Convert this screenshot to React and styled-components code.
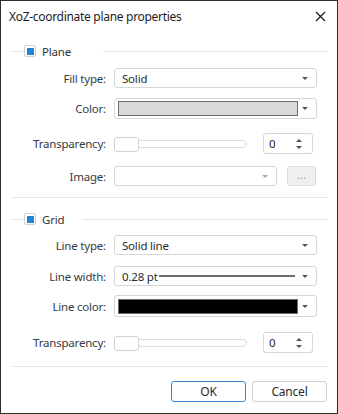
import React from 'react';
import styled, { createGlobalStyle } from 'styled-components';

const GlobalStyle = createGlobalStyle`
  html, body {
    margin: 0;
    padding: 0;
    background: #fff;
  }
  body {
    font-family: 'Segoe UI', 'Noto Sans', sans-serif;
    font-size: 11.5px;
    letter-spacing: -0.2px;
    color: #333;
  }
`;

const Dialog = styled.div`
  box-sizing: border-box;
  width: 338px;
  height: 414px;
  border: 1px solid #2d2d2d;
  background: #fff;
  display: flex;
  flex-direction: column;
`;

const TitleBar = styled.div`
  display: flex;
  align-items: center;
  justify-content: space-between;
  height: 31px;
  padding: 0 11px 0 8px;
`;

const Title = styled.div`
  font-size: 12px;
  letter-spacing: -0.3px;
  color: #1e1e1e;
`;

const CloseButton = styled.button`
  border: none;
  background: none;
  padding: 0;
  width: 11px;
  height: 11px;
  display: flex;
  cursor: pointer;
`;

const Body = styled.div`
  padding: 0 10px 0 11px;
  flex: 1;
  display: flex;
  flex-direction: column;
`;

const SectionHeader = styled.div`
  display: flex;
  align-items: center;
  height: 12px;
  margin-top: ${(p) => p.top}px;
`;

const HeaderLine = styled.div`
  height: 1px;
  background: #e6e6e6;
  flex: ${(p) => (p.grow ? 1 : 'none')};
  width: ${(p) => (p.grow ? 'auto' : '11px')};
  margin-left: ${(p) => p.gap || 0}px;
`;

const CheckBox = styled.span`
  box-sizing: border-box;
  width: 12px;
  height: 12px;
  margin-left: 1px;
  border: 1px solid #d2d2d2;
  border-radius: 2px;
  display: flex;
  align-items: center;
  justify-content: center;
  &::after {
    content: '';
    width: 7px;
    height: 7px;
    background: #1f88cf;
  }
`;

const HeaderText = styled.span`
  margin-left: 6px;
  color: #333;
`;

const Row = styled.div`
  display: grid;
  grid-template-columns: 94px 1fr;
  column-gap: 8px;
  align-items: center;
  margin-top: ${(p) => p.top}px;
  padding-right: 10px;
`;

const Label = styled.div`
  text-align: right;
  color: #333b47;
  white-space: nowrap;
`;

const Select = styled.div`
  box-sizing: border-box;
  height: ${(p) => p.h || 20}px;
  width: ${(p) => (p.w ? `${p.w}px` : '100%')};
  border: 1px solid #d6d6d6;
  border-radius: 3px;
  background: #fff;
  display: flex;
  align-items: center;
  padding: 0 8px 0 ${(p) => (p.swatch ? 3 : 7)}px;
  gap: ${(p) => (p.swatch ? 4 : 6)}px;
`;

const SelectValue = styled.span`
  flex: 1;
  display: flex;
  align-items: center;
  color: #2a2a2a;
  white-space: nowrap;
`;

const Swatch = styled.span`
  flex: 1;
  box-sizing: border-box;
  height: 15px;
  background: ${(p) => p.color};
  border: 1px solid #6e6e6e;
`;

const WidthLine = styled.span`
  flex: 1;
  height: 2px;
  background: #6b6b6b;
  margin: 0 1px 0 1px;
`;

const Arrow = styled.span`
  width: 0;
  height: 0;
  border-left: 3px solid transparent;
  border-right: 3px solid transparent;
  border-top: 3px solid ${(p) => (p.disabled ? '#a8a8a8' : '#555')};
`;

const InlineGroup = styled.div`
  display: flex;
  align-items: center;
  gap: ${(p) => p.gap}px;
`;

const Track = styled.div`
  position: relative;
  box-sizing: border-box;
  width: 133px;
  height: 8px;
  border: 1px solid #dcdcdc;
  border-radius: 4px;
  background: #fff;
`;

const Thumb = styled.div`
  position: absolute;
  left: -1px;
  top: -4px;
  box-sizing: border-box;
  width: 25px;
  height: 15px;
  background: #fff;
  border: 1px solid #d2d2d2;
  border-radius: 3px;
`;

const SpinBox = styled.div`
  box-sizing: border-box;
  width: 50px;
  height: 21px;
  border: 1px solid #d6d6d6;
  border-radius: 3px;
  display: flex;
  align-items: center;
  justify-content: space-between;
  padding: 0 10px 0 5px;
  color: #2a2a2a;
`;

const SpinArrows = styled.span`
  display: flex;
  flex-direction: column;
  gap: 4px;
  &::before, &::after {
    content: '';
    width: 0;
    height: 0;
    border-left: 3px solid transparent;
    border-right: 3px solid transparent;
  }
  &::before {
    border-bottom: 3px solid #555;
  }
  &::after {
    border-top: 3px solid #555;
  }
`;

const DotsButton = styled.button`
  box-sizing: border-box;
  width: 29px;
  height: 20px;
  border: 1px solid #dcdcdc;
  border-radius: 3px;
  background: #f0f0f0;
  color: #a0a0a0;
  font-family: inherit;
  font-size: 11px;
  padding: 0 0 4px;
  line-height: 1;
`;

const Separator = styled.div`
  height: 1px;
  background: #e6e6e6;
  margin-top: ${(p) => p.top}px;
`;

const Footer = styled.div`
  display: flex;
  justify-content: flex-end;
  gap: 6px;
  margin-top: 14px;
`;

const Button = styled.button`
  box-sizing: border-box;
  width: 75px;
  height: 21px;
  border: 1px solid ${(p) => (p.primary ? '#3d84c6' : '#d0d0d0')};
  border-radius: 3px;
  background: #fff;
  color: #2a2a2a;
  font-family: inherit;
  font-size: 12px;
  letter-spacing: -0.2px;
  padding: 0;
`;

const SectionTitle = ({ text, gap, top }) => (
  <SectionHeader top={top}>
    <HeaderLine />
    <CheckBox />
    <HeaderText>{text}</HeaderText>
    <HeaderLine grow gap={gap} />
  </SectionHeader>
);

const Slider = () => (
  <InlineGroup gap={16}>
    <Track>
      <Thumb />
    </Track>
    <SpinBox>
      <span>0</span>
      <SpinArrows />
    </SpinBox>
  </InlineGroup>
);

const App = () => (
  <>
    <GlobalStyle />
    <Dialog>
      <TitleBar>
        <Title>XoZ-coordinate plane properties</Title>
        <CloseButton aria-label='Close'>
          <svg width='11' height='11' viewBox='0 0 11 11'>
            <path d='M1 1 L10 10 M10 1 L1 10' stroke='#1a1a1a' strokeWidth='1.2' />
          </svg>
        </CloseButton>
      </TitleBar>
      <Body>
        <SectionTitle text='Plane' gap={32} top={13} />

        <Row top={11}>
          <Label>Fill type:</Label>
          <Select>
            <SelectValue>Solid</SelectValue>
            <Arrow />
          </Select>
        </Row>

        <Row top={10}>
          <Label>Color:</Label>
          <Select h={21} swatch>
            <Swatch color='#d9d9d9' />
            <Arrow />
          </Select>
        </Row>

        <Row top={14}>
          <Label>Transparency:</Label>
          <Slider />
        </Row>

        <Row top={12}>
          <Label>Image:</Label>
          <InlineGroup gap={10}>
            <Select w={163}>
              <SelectValue />
              <Arrow disabled />
            </Select>
            <DotsButton disabled>...</DotsButton>
          </InlineGroup>
        </Row>

        <Separator top={11} />

        <SectionTitle text='Grid' gap={18} top={15} />

        <Row top={10}>
          <Label>Line type:</Label>
          <Select>
            <SelectValue>Solid line</SelectValue>
            <Arrow />
          </Select>
        </Row>

        <Row top={11}>
          <Label>Line width:</Label>
          <Select>
            <SelectValue>
              0.28 pt
              <WidthLine />
            </SelectValue>
            <Arrow />
          </Select>
        </Row>

        <Row top={9}>
          <Label>Line color:</Label>
          <Select h={22} swatch>
            <Swatch color='#000' />
            <Arrow />
          </Select>
        </Row>

        <Row top={15}>
          <Label>Transparency:</Label>
          <Slider />
        </Row>

        <Separator top={13} />

        <Footer>
          <Button primary>OK</Button>
          <Button>Cancel</Button>
        </Footer>
      </Body>
    </Dialog>
  </>
);

export default App;
